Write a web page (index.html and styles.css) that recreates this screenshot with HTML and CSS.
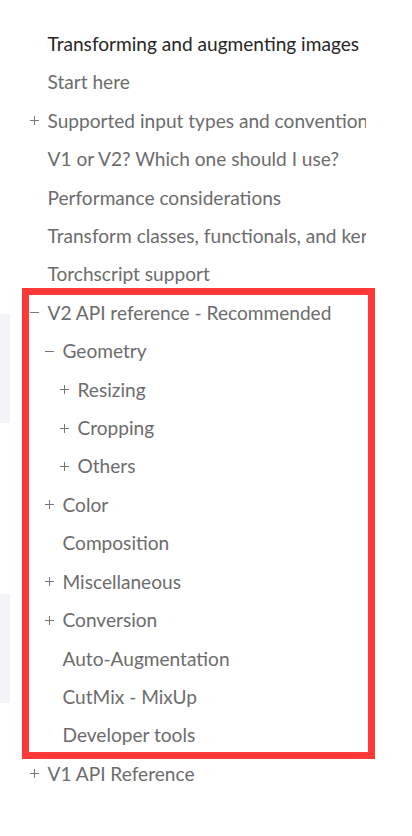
FILE: index.html
```html
<!DOCTYPE html>
<html lang="en">
<head>
<meta charset="utf-8">
<title>Transforming and augmenting images</title>
<link rel="stylesheet" href="styles.css">
</head>
<body>
<div class="page">
  <div class="gutter">
    <div class="strip strip-a"></div>
    <div class="strip strip-b"></div>
  </div>
  <nav class="toc">
    <ul class="lvl0">
      <li class="row current"><span class="label">Transforming and augmenting images</span></li>
      <li class="row"><span class="label">Start here</span></li>
      <li class="row"><span class="sign plus"></span><span class="label">Supported input types and conventions</span></li>
      <li class="row"><span class="label">V1 or V2? Which one should I use?</span></li>
      <li class="row"><span class="label">Performance considerations</span></li>
      <li class="row"><span class="label">Transform classes, functionals, and kernels</span></li>
      <li class="row"><span class="label">Torchscript support</span></li>
      <li class="group">
        <div class="row"><span class="sign minus"></span><span class="label">V2 API reference - Recommended</span></div>
        <ul class="lvl1">
          <li class="group">
            <div class="row"><span class="sign minus"></span><span class="label">Geometry</span></div>
            <ul class="lvl2">
              <li class="row"><span class="sign plus"></span><span class="label">Resizing</span></li>
              <li class="row"><span class="sign plus"></span><span class="label">Cropping</span></li>
              <li class="row"><span class="sign plus"></span><span class="label">Others</span></li>
            </ul>
          </li>
          <li class="row"><span class="sign plus"></span><span class="label">Color</span></li>
          <li class="row"><span class="label">Composition</span></li>
          <li class="row"><span class="sign plus"></span><span class="label">Miscellaneous</span></li>
          <li class="row"><span class="sign plus"></span><span class="label">Conversion</span></li>
          <li class="row"><span class="label">Auto-Augmentation</span></li>
          <li class="row"><span class="label">CutMix - MixUp</span></li>
          <li class="row"><span class="label">Developer tools</span></li>
        </ul>
      </li>
      <li class="row"><span class="sign plus"></span><span class="label">V1 API Reference</span></li>
    </ul>
  </nav>
  <div class="highlight" aria-hidden="true"></div>
</div>
</body>
</html>
```

FILE: styles.css
```css
html, body {
  margin: 0;
  padding: 0;
  background: #ffffff;
}

.page {
  position: relative;
  display: flex;
  width: 412px;
  height: 836px;
  overflow: hidden;
  font-family: "Lato", "Liberation Sans", sans-serif;
}

.gutter {
  flex: 0 0 10px;
  display: flex;
  flex-direction: column;
}

.strip {
  width: 10px;
  height: 109px;
  background: #f3f4f7;
}

.strip-a {
  margin-top: 314px;
}

.strip-b {
  margin-top: 171px;
}

.toc {
  flex: 0 0 356px;
  overflow: hidden;
  padding-top: 25px;
}

.toc ul {
  list-style: none;
  margin: 0;
  padding: 0;
}

.toc .lvl0 {
  padding-left: 37.5px;
}

.toc .lvl1,
.toc .lvl2 {
  padding-left: 15px;
}

.row {
  position: relative;
  display: block;
  height: 38.42px;
  line-height: 38.42px;
  font-size: 19.1px;
  color: #6c6c6d;
  white-space: nowrap;
}

.row.current {
  color: #262626;
}

.sign {
  position: absolute;
  left: -17.5px;
  top: 14.5px;
  width: 9px;
  height: 9px;
}

.sign::before,
.sign::after {
  content: "";
  position: absolute;
  background: #77777a;
}

.sign::before {
  left: 0;
  top: 4px;
  width: 9px;
  height: 1px;
}

.plus::after {
  left: 4px;
  top: 0;
  width: 1px;
  height: 9px;
}

.minus::after {
  display: none;
}

.highlight {
  position: absolute;
  left: 22px;
  top: 288px;
  width: 339px;
  height: 457px;
  border: 7px solid #ff3838;
  pointer-events: none;
}
```
